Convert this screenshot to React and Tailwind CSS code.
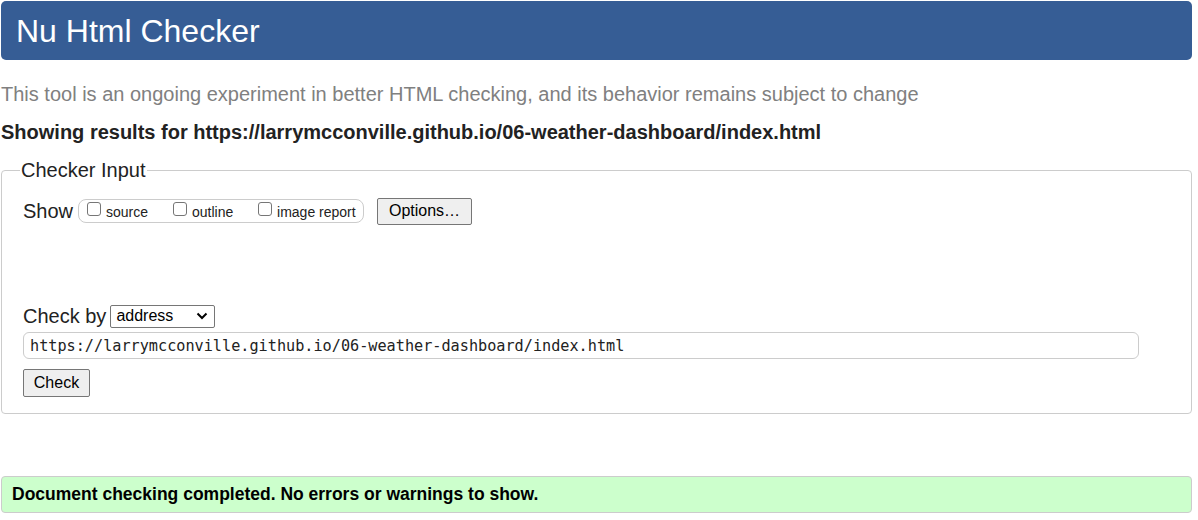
export default function App() {
  const sans = { fontFamily: '"Liberation Sans", Arial, sans-serif' };
  return (
    <div className="w-[1198px] h-[520px] bg-white text-[#222]" style={sans}>
      <div className="ml-[1px] mt-[1px] w-[1191px] h-[59px] rounded-[5px] bg-[#365d95] flex items-center pl-[15px]">
        <h1 className="text-[32px] leading-none text-white font-normal">Nu Html Checker</h1>
      </div>
      <p className="mt-[22px] ml-[1px] text-[20px] leading-[24px] text-[#808080]">
        This tool is an ongoing experiment in better HTML checking, and its behavior remains subject to change
      </p>
      <p className="mt-[14px] ml-[1px] text-[20px] leading-[24px] font-bold text-[#222]">
        Showing results for https://larrymcconville.github.io/06-weather-dashboard/index.html
      </p>
      <fieldset className="mt-[14px] ml-[1px] w-[1191px] h-[256px] border border-[#cccccc] rounded-[4px] pl-[21px] pr-0">
        <legend className="ml-[-3px] px-[1px] text-[20px] leading-[24px] text-[#222]">Checker Input</legend>
        <div className="flex items-center mt-[15px] h-[28px]">
          <span className="text-[20px] leading-[24px]">Show</span>
          <div className="ml-[5px] h-[24px] w-[286px] border border-[#cccccc] rounded-[8px] flex items-center pl-[8px] text-[14px] whitespace-nowrap">
            <label className="flex items-center w-[86px] shrink-0">
              <span className="inline-block w-[14px] h-[14px] border border-[#767676] rounded-[3px] bg-white mt-[-5px] shrink-0"></span>
              <span className="ml-[5px] mt-[3px]">source</span>
            </label>
            <label className="flex items-center w-[85px] shrink-0">
              <span className="inline-block w-[14px] h-[14px] border border-[#767676] rounded-[3px] bg-white mt-[-5px] shrink-0"></span>
              <span className="ml-[5px] mt-[3px]">outline</span>
            </label>
            <label className="flex items-center shrink-0">
              <span className="inline-block w-[14px] h-[14px] border border-[#767676] rounded-[3px] bg-white mt-[-5px] shrink-0"></span>
              <span className="ml-[5px] mt-[3px]">image report</span>
            </label>
          </div>
          <button className="ml-[13px] w-[95px] h-[27px] border border-[#767676] rounded-[2px] bg-[#efefef] text-[16px] text-black flex items-center justify-center">
            Options…
          </button>
        </div>
        <div className="flex items-center mt-[79px] h-[24px]">
          <span className="text-[20px] leading-[24px]">Check by</span>
          <div className="ml-[4px] w-[105px] h-[23px] border border-[#767676] rounded-[2px] bg-white flex items-center pl-[5px] pr-[6px] justify-between text-[16px] text-black">
            <span>address</span>
            <svg width="12" height="8" viewBox="0 0 12 8" fill="none">
              <path d="M1.5 1.5 L6 6 L10.5 1.5" stroke="#000" strokeWidth="2" />
            </svg>
          </div>
        </div>
        <div className="mt-[4px] w-[1116px] h-[27px] border border-[#cccccc] rounded-[6px] flex items-center pl-[6px] pt-[2px]">
          <span className="text-[15.2px] text-[#222]" style={{ fontFamily: '"DejaVu Sans Mono", monospace' }}>
            https://larrymcconville.github.io/06-weather-dashboard/index.html
          </span>
        </div>
        <button className="mt-[10px] w-[67px] h-[28px] border border-[#767676] rounded-[2px] bg-[#efefef] text-[16px] text-black flex items-center justify-center">
          Check
        </button>
      </fieldset>
      <div className="mt-[62px] ml-[1px] w-[1191px] h-[37px] border border-[#cccccc] rounded-[4px] bg-[#ccffcc] flex items-center pl-[10px]">
        <span className="text-[17.5px] font-bold text-black">Document checking completed. No errors or warnings to show.</span>
      </div>
    </div>
  );
}
